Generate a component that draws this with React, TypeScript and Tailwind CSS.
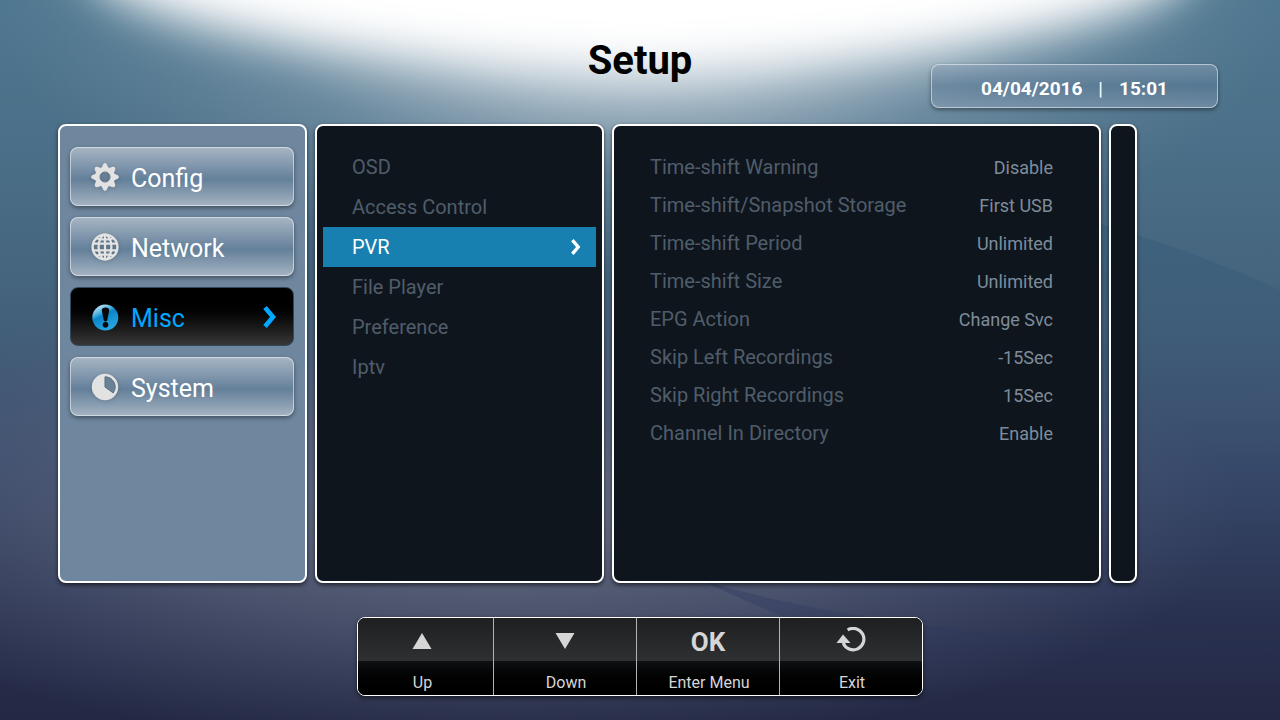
import type { ReactNode } from "react";

type MenuItem = {
  label: string;
  icon: ReactNode;
  active?: boolean;
};

const GearIcon = () => (
  <svg viewBox="0 0 28 28" className="size-7 drop-shadow-sm">
    <defs>
      <mask id="gear-hole">
        <rect width="28" height="28" fill="white" />
        <circle cx="14" cy="14" r="4.8" fill="black" />
      </mask>
    </defs>
    <g mask="url(#gear-hole)" fill="#e2e2e2">
      <circle cx="14" cy="14" r="10" />
      {[0, 45, 90, 135, 180, 225, 270, 315].map((angle) => (
        <path
          key={angle}
          d="M10.4 5L12.3 1.2Q14 -1 15.7 1.2L17.6 5Z"
          transform={`rotate(${angle} 14 14)`}
        />
      ))}
    </g>
    <circle cx="14" cy="14" r="5" fill="none" stroke="#5e6e7d" strokeWidth="1" />
  </svg>
);

const GlobeIcon = () => (
  <svg viewBox="0 0 28 28" className="size-7 drop-shadow-sm">
    <circle cx="14" cy="14" r="13" fill="#5f7588" />
    <g fill="none" stroke="#e4e4e4" strokeWidth="2.2">
      <circle cx="14" cy="14" r="12.4" strokeWidth="2.4" />
      <ellipse cx="14" cy="14" rx="6.4" ry="12.4" />
      <path d="M14 2V26M2 10.6H26M2 17.4H26M5 5.2Q14 8 23 5.2M5 22.8Q14 20 23 22.8" />
    </g>
  </svg>
);

const AlertIcon = () => (
  <svg viewBox="0 0 28 28" className="size-7">
    <defs>
      <linearGradient id="alert-fill" x1="0" y1="0" x2="0.5" y2="1">
        <stop offset="0" stopColor="#ffffff" />
        <stop offset="0.4" stopColor="#3aa9df" />
        <stop offset="0.5" stopColor="#0a86c8" />
        <stop offset="1" stopColor="#28a5e0" />
      </linearGradient>
    </defs>
    <circle cx="14.3" cy="14.6" r="13" fill="url(#alert-fill)" />
    <path d="M10.8 7.5Q10.8 4.6 14.5 4.6T18.2 7.5L16.2 17.6Q14.5 19.4 12.8 17.6Z" fill="#080808" />
    <circle cx="14.5" cy="21.7" r="2.8" fill="#080808" />
  </svg>
);

const PieIcon = () => (
  <svg viewBox="0 0 28 28" className="size-7 drop-shadow-sm">
    <circle cx="14" cy="14" r="13.2" fill="#e2e2e2" />
    <path d="M14 3.8A10.2 10.2 0 0 1 22.2 19.9L14 14Z" fill="#6a8298" stroke="#5a6b7b" strokeWidth="1" />
  </svg>
);

const menu: MenuItem[] = [
  { label: "Config", icon: <GearIcon /> },
  { label: "Network", icon: <GlobeIcon /> },
  { label: "Misc", icon: <AlertIcon />, active: true },
  { label: "System", icon: <PieIcon /> },
];

const sections = ["OSD", "Access Control", "PVR", "File Player", "Preference", "Iptv"];

const settings = [
  { name: "Time-shift Warning", value: "Disable" },
  { name: "Time-shift/Snapshot Storage", value: "First USB" },
  { name: "Time-shift Period", value: "Unlimited" },
  { name: "Time-shift Size", value: "Unlimited" },
  { name: "EPG Action", value: "Change Svc" },
  { name: "Skip Left Recordings", value: "-15Sec" },
  { name: "Skip Right Recordings", value: "15Sec" },
  { name: "Channel In Directory", value: "Enable" },
];

const keys = [
  {
    label: "Up",
    icon: (
      <svg viewBox="0 0 20 16" className="h-4 w-5" fill="#d6d6d6">
        <path d="M10 0L19.5 16H0.5Z" />
      </svg>
    ),
  },
  {
    label: "Down",
    icon: (
      <svg viewBox="0 0 20 16" className="h-4 w-5" fill="#d6d6d6">
        <path d="M0.5 0H19.5L10 16Z" />
      </svg>
    ),
  },
  { label: "Enter Menu", icon: <span className="pt-1 text-[26px] font-bold">OK</span> },
  {
    label: "Exit",
    icon: (
      <svg viewBox="0 0 30 28" className="h-7 w-[30px]">
        <path d="M11.6 3A10.7 10.7 0 1 1 7.2 16" fill="none" stroke="#d6d6d6" strokeWidth="3.2" />
        <path d="M7 7.5L14.5 16H0.5Z" fill="#d6d6d6" />
      </svg>
    ),
  },
];

const panel = "rounded-lg border-2 border-white shadow-[0_2px_4px_rgba(0,0,0,0.6)]";
const glass = "border border-white/50 shadow-[0_2px_4px_rgba(0,0,0,0.4)]";

function Chevron({ className }: { className: string }) {
  return (
    <svg viewBox="0 0 14 22" className={className} fill="none" stroke="currentColor">
      <path d="M2 1.5L10 11L2 20.5" strokeWidth="4.6" />
    </svg>
  );
}

// Soft light from above with a few faint curved bands
function Backdrop() {
  return (
    <svg
      className="absolute inset-0 -z-10 h-full w-full"
      viewBox="0 0 1280 720"
      preserveAspectRatio="none"
      aria-hidden="true"
    >
      <defs>
        <linearGradient id="sky" x1="0" y1="0" x2="0" y2="1">
          <stop offset="0" stopColor="#4f7890" />
          <stop offset="0.25" stopColor="#4a6d86" />
          <stop offset="0.45" stopColor="#43607a" />
          <stop offset="0.65" stopColor="#37496a" />
          <stop offset="0.85" stopColor="#2a3251" />
          <stop offset="1" stopColor="#232843" />
        </linearGradient>
        <radialGradient id="haze">
          <stop offset="0" stopColor="#71798a" stopOpacity="0.85" />
          <stop offset="0.5" stopColor="#696f84" stopOpacity="0.5" />
          <stop offset="1" stopColor="#5d6680" stopOpacity="0" />
        </radialGradient>
        <radialGradient id="halo">
          <stop offset="0" stopColor="#ffffff" stopOpacity="0.85" />
          <stop offset="0.3" stopColor="#e6eaee" stopOpacity="0.62" />
          <stop offset="0.6" stopColor="#c4d0da" stopOpacity="0.25" />
          <stop offset="1" stopColor="#9fb0c0" stopOpacity="0" />
        </radialGradient>
        <linearGradient id="band" x1="0" y1="0" x2="0" y2="1">
          <stop offset="0" stopColor="#2b5878" stopOpacity="0.4" />
          <stop offset="1" stopColor="#2b4a6c" stopOpacity="0" />
        </linearGradient>
        <linearGradient id="low-band" x1="0" y1="0" x2="0" y2="1">
          <stop offset="0" stopColor="#2a3763" stopOpacity="0.4" />
          <stop offset="1" stopColor="#2a2f58" stopOpacity="0" />
        </linearGradient>
        <filter id="soft" x="-20%" y="-60%" width="140%" height="220%">
          <feGaussianBlur stdDeviation="20 24" />
        </filter>
      </defs>
      <rect width="1280" height="720" fill="url(#sky)" />
      <ellipse cx="500" cy="510" rx="740" ry="240" fill="url(#haze)" />
      <path d="M1000 200Q1150 230 1280 290V382Q1200 412 1100 412Z" fill="url(#band)" />
      <path d="M700 580Q920 645 1280 645V690H1000Q850 650 700 580Z" fill="url(#low-band)" />
      <ellipse cx="640" cy="10" rx="640" ry="270" fill="url(#halo)" />
      <ellipse cx="640" cy="-46" rx="560" ry="114" fill="#ffffff" filter="url(#soft)" />
    </svg>
  );
}

export default function App() {
  return (
    <div className="relative isolate flex min-h-screen flex-col overflow-hidden font-['Roboto',sans-serif] text-white">
      <Backdrop />

      <header className="grid h-[124px] grid-cols-[1fr_auto_1fr] items-start">
        <h1 className="col-start-2 pt-[37px] text-[40px] leading-[48px] font-bold text-black">Setup</h1>
        <div
          className={`mt-16 mr-[62px] flex h-11 w-[287px] items-center justify-center gap-4 justify-self-end rounded-lg bg-linear-to-b from-[#8ca0b8]/50 via-[#5c7a96]/50 to-[#8ca0b8]/50 pt-1.5 text-[19px] font-bold ${glass}`}
        >
          <span>04/04/2016</span>
          <span className="font-normal">|</span>
          <span>15:01</span>
        </div>
      </header>

      <main className="mr-[143px] ml-[58px] grid min-h-[459px] flex-1 grid-cols-[249fr_289fr_489fr_28fr] gap-2">
        <nav className={`flex flex-col gap-[11px] bg-[#6e869e] pt-[21px] pr-[11px] pl-2.5 ${panel}`}>
          {menu.map((item) => (
            <button
              key={item.label}
              className={`flex h-[59px] items-center gap-3 rounded-lg pr-4 pl-5 text-[25px] ${
                item.active
                  ? "border border-[#33475c] bg-linear-to-b from-black from-15% to-[#383838] text-[#00a8ff]"
                  : `bg-linear-to-b from-[#a6b4c3] via-[#64809a] via-55% to-[#a3b2c1] ${glass}`
              }`}
            >
              {item.icon}
              <span className="pt-[5px]">{item.label}</span>
              {item.active && <Chevron className="ml-auto h-[22px] w-[14px]" />}
            </button>
          ))}
        </nav>

        <ul className={`bg-[#0f151c] px-1.5 pt-[21px] text-xl text-[#4f5d6b] ${panel}`}>
          {sections.map((name) => (
            <li key={name}>
              <button
                className={`flex h-10 w-full items-center justify-between pr-3.5 pl-[29px] ${
                  name === "PVR" ? "bg-[#1880b0] text-white" : ""
                }`}
              >
                {name}
                {name === "PVR" && <Chevron className="h-4 w-3" />}
              </button>
            </li>
          ))}
        </ul>

        <dl className={`bg-[#0f151c] pt-[22px] pr-[46px] pl-9 ${panel}`}>
          {settings.map((row) => (
            <div key={row.name} className="flex h-[38px] items-center justify-between">
              <dt className="text-xl text-[#4f5d6b]">{row.name}</dt>
              <dd className="pt-0.5 text-lg text-[#7d8c9b]">{row.value}</dd>
            </div>
          ))}
        </dl>

        <div className={`bg-[#0f151c] ${panel}`} />
      </main>

      <footer className="mx-auto mt-[34px] mb-6 grid w-[566px] grid-cols-[136fr_143fr_143fr_142fr] overflow-hidden rounded-lg border border-white bg-black text-[#d6d6d6] shadow-[0_2px_4px_rgba(0,0,0,0.5)]">
        {keys.map((key) => (
          <button
            key={key.label}
            className="group flex flex-col border-r border-white/70 last:border-r-0"
          >
            <span className="flex h-[43px] w-full items-center justify-center bg-linear-to-b from-[#1e1f21] to-[#2f3031] pt-0.5 group-first:pr-2">
              {key.icon}
            </span>
            <span className="flex h-[34px] w-full items-center justify-center bg-linear-to-b from-[#101113] to-black pt-2.5 pl-0.5 text-base group-first:pr-2">
              {key.label}
            </span>
          </button>
        ))}
      </footer>
    </div>
  );
}
